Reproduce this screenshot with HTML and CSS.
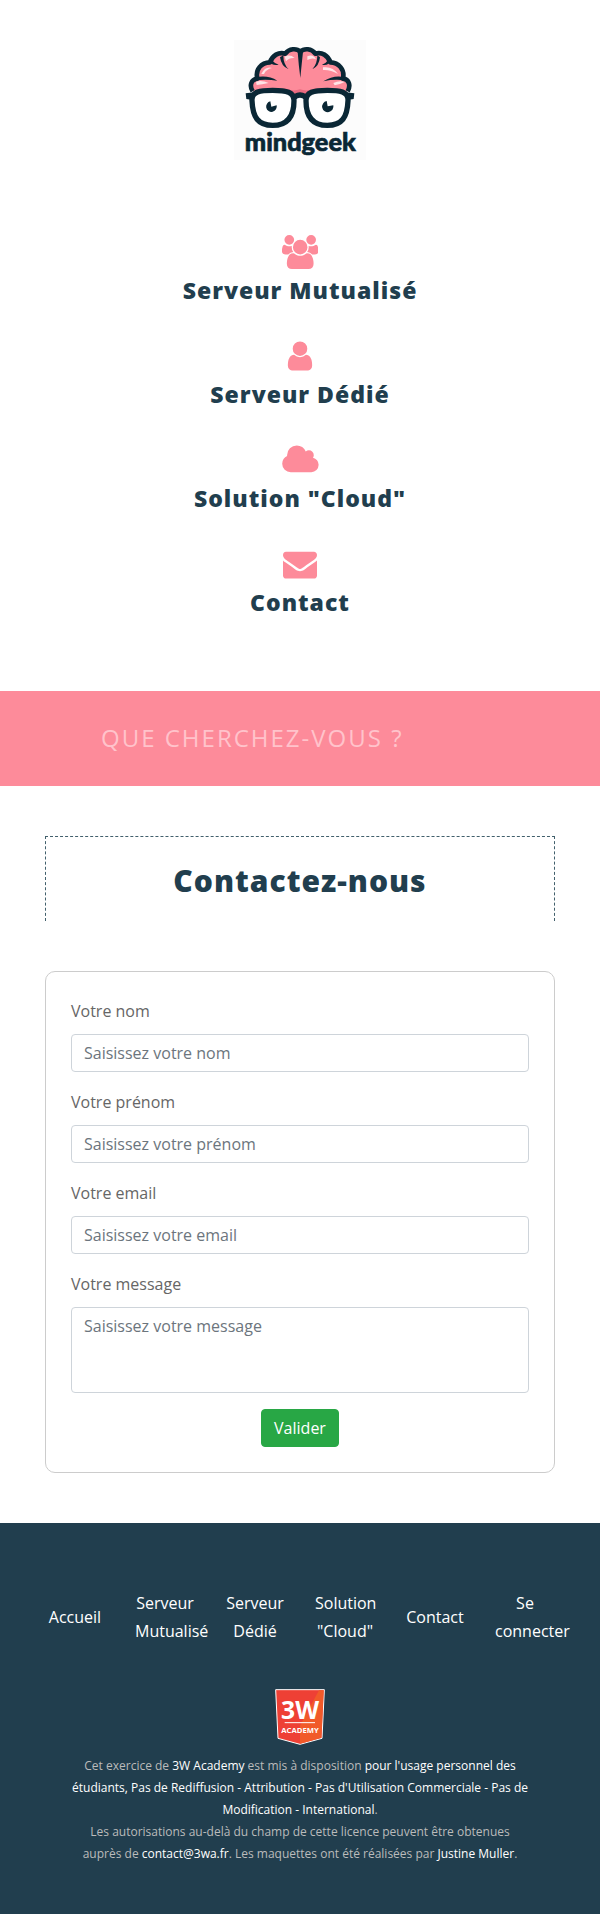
FILE: index.html
```html
<!DOCTYPE html>
<html lang="fr">
<head>
<meta charset="utf-8">
<meta name="viewport" content="width=device-width, initial-scale=1">
<title>Mindgeek - Contactez-nous</title>
<link rel="stylesheet" href="styles.css">
</head>
<body>
<header class="header">
  <a class="logo" href="#">
    <svg viewBox="42 30 396 360" role="img" aria-label="mindgeek">
      <rect x="42" y="30" width="396" height="360" fill="#fcfcfc"/>
      <path d="M98 184C87 166 94 148 112 146C105 118 124 98 150 97C157 76 176 65 196 71C207 55 230 54 241 65C252 54 275 55 286 71C305 65 324 76 331 97C356 98 375 118 369 146C387 148 393 166 383 184L240 196Z" fill="#fd8b9a"/>
      <path d="M98 184C87 166 94 148 112 146C105 118 124 98 150 97C157 76 176 65 196 71C207 55 230 54 241 65C252 54 275 55 286 71C305 65 324 76 331 97C356 98 375 118 369 146C387 148 393 166 383 184" fill="none" stroke="#0a2735" stroke-width="14" stroke-linejoin="round"/>
      <path d="M194 80Q210 72 224 84Q206 83 198 94ZM262 79Q280 72 288 88Q276 82 262 90ZM124 132Q136 108 156 114Q138 118 132 132ZM309 112Q338 108 354 132Q330 118 309 120ZM108 155Q126 150 146 159Q126 164 110 165ZM340 159Q358 150 374 156Q358 164 344 166Z" fill="#ffe3e6"/>
      <path d="M233 66L249 66Q244 112 241 144Q236 106 233 66ZM180 82L190 76Q190 104 206 118Q184 110 180 82ZM292 76L300 82Q297 110 277 118Q292 102 292 76ZM106 142Q144 134 172 152Q140 147 106 151ZM374 142Q342 134 310 154Q342 147 374 151ZM145 93L154 89Q164 100 176 104Q156 108 145 93ZM335 89L327 87Q318 100 306 104Q326 108 335 89Z" fill="#0a2735"/>
      <path d="M190 174Q218 186 240 178Q262 186 290 174L278 196L204 196Z" fill="#e96b80"/>
      <path d="M77 190L104 187L98 210L79 207ZM403 190L376 187L382 210L401 207ZM222 192Q240 182 258 192L254 210Q240 196 226 210Z" fill="#0a2735"/>
      <path d="M96 212C94 184 122 181 158 181C200 181 222 186 222 212C222 258 204 286 158 286C114 286 98 262 96 212ZM384 212C386 184 358 181 322 181C280 181 258 186 258 212C258 258 276 286 322 286C366 286 382 262 384 212Z" fill="#fff" stroke="#0a2735" stroke-width="16"/>
      <path d="M151 214L154 230L170 226A16 16 0 1 1 151 214ZM320 213L323 229L340 226A17 17 0 1 1 320 213Z" fill="#0a2735"/>
      <text class="logo-text" x="241" y="362" text-anchor="middle">mindgeek</text>
    </svg>
  </a>
  <nav class="main-nav" aria-label="Navigation principale">
    <a class="main-link" href="#">
      <svg class="icon" viewBox="0 0 1920 1792" aria-hidden="true"><path d="M593 896q-162 5-265 128h-134q-82 0-138-40.5t-56-118.5q0-353 124-353 6 0 43.5 21t97.5 42.5 119 21.5q67 0 133-23-5 37-5 66 0 139 81 256zm1071 637q0 120-73 189.5t-194 69.5h-874q-121 0-194-69.5t-73-189.5q0-53 3.5-103.5t14-109 26.5-108.5 43-97.5 62-81 85.5-53.5 111.5-20q10 0 43 21.5t73 48 107 48 135 21.5 135-21.5 107-48 73-48 43-21.5q61 0 111.5 20t85.5 53.5 62 81 43 97.5 26.5 108.5 14 109 3.5 103.5zm-1024-1277q0 106-75 181t-181 75-181-75-75-181 75-181 181-75 181 75 75 181zm704 384q0 159-112.5 271.5t-271.5 112.5-271.5-112.5-112.5-271.5 112.5-271.5 271.5-112.5 271.5 112.5 112.5 271.5zm576 225q0 78-56 118.5t-138 40.5h-134q-103-123-265-128 81-117 81-256 0-29-5-66 66 23 133 23 59 0 119-21.5t97.5-42.5 43.5-21q124 0 124 353zm-128-609q0 106-75 181t-181 75-181-75-75-181 75-181 181-75 181 75 75 181z"/></svg>
      <span>Serveur Mutualisé</span>
    </a>
    <a class="main-link" href="#">
      <svg class="icon" viewBox="0 0 1792 1792" aria-hidden="true"><path d="M1536 1399q0 109-62.5 187t-150.5 78h-854q-88 0-150.5-78t-62.5-187q0-85 8.5-160.5t31.5-152 58.5-131 94-89 134.5-34.5q131 128 313 128t313-128q76 0 134.5 34.5t94 89 58.5 131 31.5 152 8.5 160.5zm-256-887q0 159-112.5 271.5t-271.5 112.5-271.5-112.5-112.5-271.5 112.5-271.5 271.5-112.5 271.5 112.5 112.5 271.5z"/></svg>
      <span>Serveur Dédié</span>
    </a>
    <a class="main-link" href="#">
      <svg class="icon" viewBox="0 0 2048 1792" aria-hidden="true"><path d="M1984 1152q0 159-112.5 271.5t-271.5 112.5h-1088q-185 0-316.5-131.5t-131.5-316.5q0-132 71-241.5t187-163.5q-2-28-2-43 0-212 150-362t362-150q158 0 286.5 88t187.5 230q70-62 166-62 106 0 181 75t75 181q0 75-41 138 129 30 213 134.5t84 239.5z"/></svg>
      <span>Solution "Cloud"</span>
    </a>
    <a class="main-link" href="#">
      <svg class="icon" viewBox="0 0 1792 1792" aria-hidden="true"><path d="M1792 710v794q0 66-47 113t-113 47h-1472q-66 0-113-47t-47-113v-794q44 49 101 87 362 246 497 345 57 42 92.5 65.5t94.5 48 110 24.5h2q51 0 110-24.5t94.5-48 92.5-65.5q170-123 498-345 57-39 100-87zm0-294q0 79-49 151t-122 123q-376 261-468 325-10 7-42.5 31t-54 38.5-52 32.5-57.5 27-50 9h-2q-23 0-50-9t-57.5-27-52-32.5-54-38.5-42.5-31q-91-64-262-182.5t-205-142.5q-62-42-117-115.5t-55-136.5q0-78 41.5-130t118.5-52h1472q65 0 112.5 47t47.5 113z"/></svg>
      <span>Contact</span>
    </a>
  </nav>
</header>

<form class="search" role="search">
  <input class="search-input" type="search" placeholder="QUE CHERCHEZ-VOUS ?" aria-label="Que cherchez-vous ?">
</form>

<main class="main">
  <h1 class="title">Contactez-nous</h1>
  <form class="card">
    <div class="field">
      <label for="nom">Votre nom</label>
      <input class="control" id="nom" type="text" placeholder="Saisissez votre nom">
    </div>
    <div class="field">
      <label for="prenom">Votre prénom</label>
      <input class="control" id="prenom" type="text" placeholder="Saisissez votre prénom">
    </div>
    <div class="field">
      <label for="email">Votre email</label>
      <input class="control" id="email" type="email" placeholder="Saisissez votre email">
    </div>
    <div class="field">
      <label for="message">Votre message</label>
      <textarea class="control" id="message" rows="3" placeholder="Saisissez votre message"></textarea>
    </div>
    <button class="submit" type="submit">Valider</button>
  </form>
</main>

<footer class="footer">
  <ul class="footer-nav">
    <li><a href="#">Accueil</a></li>
    <li><a href="#">Serveur Mutualisé</a></li>
    <li><a href="#">Serveur Dédié</a></li>
    <li><a href="#">Solution "Cloud"</a></li>
    <li><a href="#">Contact</a></li>
    <li><a href="#">Se connecter</a></li>
  </ul>
  <svg class="badge" viewBox="0 0 150 168" role="img" aria-label="3W Academy">
    <path d="M2 2H148L141 148L75 166L9 148Z" fill="#ee4035" stroke="#fff" stroke-width="3"/>
    <path d="M75 110L132 4H146L139 146L75 164Z" fill="#f15a29"/>
    <text class="badge-big" x="75" y="91" text-anchor="middle">3W</text>
    <path d="M29 101H120" stroke="#fff" stroke-width="3"/>
    <text class="badge-small" x="75" y="131" text-anchor="middle">ACADEMY</text>
  </svg>
  <p class="legal">Cet exercice de <a href="#">3W Academy</a> est mis à disposition <a href="#">pour l'usage personnel des étudiants, Pas de Rediffusion - Attribution - Pas d'Utilisation Commerciale - Pas de Modification - International</a>.<br>Les autorisations au-delà du champ de cette licence peuvent être obtenues auprès de <a href="#">contact@3wa.fr</a>. Les maquettes ont été réalisées par <a href="#">Justine Muller</a>.</p>
</footer>
</body>
</html>
```
FILE: styles.css
```css
*, *::before, *::after {
  box-sizing: border-box;
}

body {
  margin: 0;
  background: #fff;
  color: #666;
  font-family: "Open Sans", "Noto Sans", sans-serif;
  font-size: 16px;
  line-height: 28px;
}

a {
  color: inherit;
  text-decoration: none;
}

.header {
  display: flex;
  flex-direction: column;
  align-items: center;
  gap: 75px;
  padding: 40px 20px 68px;
}

.logo svg {
  display: block;
  width: 132px;
  height: 120px;
}

.logo-text {
  fill: #0a2735;
  stroke: #0a2735;
  stroke-width: 2px;
  font-family: Lato, sans-serif;
  font-size: 76px;
  font-weight: 900;
}

.main-nav {
  display: flex;
  flex-direction: column;
  align-items: center;
  gap: 28px;
}

.main-link {
  display: flex;
  flex-direction: column;
  align-items: center;
  color: #213e4e;
  font-size: 23px;
  font-weight: 800;
  line-height: 42px;
  letter-spacing: 1px;
}

.icon {
  height: 34px;
  fill: #fd8b9a;
}

.search {
  padding: 23px 100px 25px;
  background: #fd8b9a;
}

.search-input {
  display: block;
  width: 100%;
  height: 47px;
  padding: 0 1px;
  border: 0;
  background: transparent;
  color: #fff;
  font: 24px "Open Sans", sans-serif;
  letter-spacing: 2px;
  appearance: none;
}

.search-input::placeholder {
  color: #ffc3cb;
}

.main {
  width: 85%;
  margin: 50px auto;
}

.title {
  margin: 0 0 50px;
  padding: 22px 20px 18px;
  border: 1px dashed #42606c;
  border-bottom: 0;
  color: #213e4e;
  font-size: 30px;
  font-weight: 800;
  line-height: 44px;
  letter-spacing: 1px;
  text-align: center;
}

.card {
  display: flex;
  flex-direction: column;
  gap: 16px;
  padding: 25px;
  border: 1px solid #ccc;
  border-radius: 10px;
}

.field {
  display: flex;
  flex-direction: column;
  gap: 8px;
}

.field label {
  line-height: 29px;
}

.control {
  display: block;
  width: 100%;
  padding: 6px 12px;
  border: 1px solid #ced4da;
  border-radius: 4px;
  background: #fff;
  color: #495057;
  font: 16px/24px "Open Sans", sans-serif;
  resize: none;
}

.control::placeholder {
  color: #6c757d;
}

.submit {
  align-self: center;
  padding: 6px 12px;
  border: 1px solid #28a745;
  border-radius: 4px;
  background: #28a745;
  color: #fff;
  font: 16px/24px "Open Sans", sans-serif;
}

.footer {
  display: flex;
  flex-direction: column;
  align-items: center;
  padding: 50px 30px;
  background: #213e4e;
  color: #bbb;
}

.footer a {
  color: #fff;
}

.footer-nav {
  display: grid;
  grid-template-columns: repeat(6, minmax(0, 1fr));
  align-items: center;
  width: 100%;
  margin: 0 0 28px;
  padding: 0;
  list-style: none;
  text-align: center;
}

.footer-nav li {
  padding: 16px 15px;
}

.badge {
  width: 50px;
  height: 56px;
}

.badge text {
  fill: #fff;
  font-family: "Open Sans", sans-serif;
  font-weight: 700;
}

.badge-big {
  font-size: 74px;
}

.badge-small {
  font-size: 23px;
}

.legal {
  width: 85%;
  margin: 10px 0 0;
  font-size: 12px;
  line-height: 22px;
  text-align: center;
}
```
